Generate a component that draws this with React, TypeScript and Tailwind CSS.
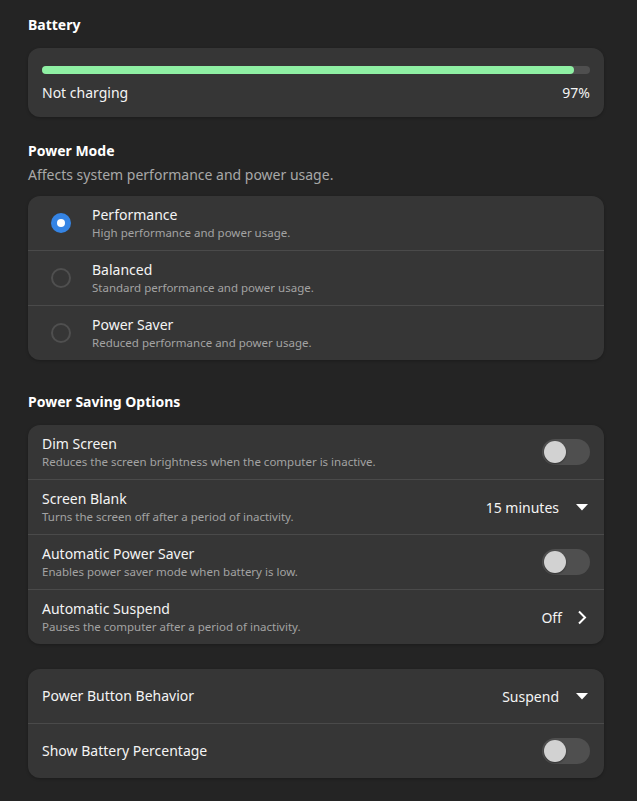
import React from "react";

const font = { fontFamily: '"Noto Sans", "Open Sans", sans-serif' };

function Toggle() {
  return (
    <div className="w-[48px] h-[26px] rounded-full bg-[#4f4f4f] p-[2px] flex items-center shrink-0">
      <div className="w-[22px] h-[22px] rounded-full bg-[#d2d2d2] shadow-[0_1px_2px_rgba(0,0,0,0.4)]" />
    </div>
  );
}

function Caret() {
  return (
    <svg width="12" height="7" viewBox="0 0 12 7" className="shrink-0">
      <path d="M0 0 H12 L6 6.5 Z" fill="#ffffff" />
    </svg>
  );
}

function Chevron() {
  return (
    <svg width="10" height="15" viewBox="0 0 10 15" className="shrink-0">
      <path d="M2 1.5 L8 7.5 L2 13.5" fill="none" stroke="#ffffff" strokeWidth="2" />
    </svg>
  );
}

function Radio({ on }: { on?: boolean }) {
  if (on)
    return (
      <div className="w-[20px] h-[20px] rounded-full bg-[#3584e4] flex items-center justify-center shrink-0">
        <div className="w-[8px] h-[8px] rounded-full bg-white" />
      </div>
    );
  return <div className="w-[20px] h-[20px] rounded-full border-2 border-[#4f4f4f] shrink-0" />;
}

function Row({
  title,
  sub,
  children,
  last,
}: {
  title: string;
  sub?: string;
  children?: React.ReactNode;
  last?: boolean;
}) {
  return (
    <div
      className={
        "h-[54px] flex items-center justify-between pl-[14px] pr-[14px] box-content " +
        (last ? "" : "border-b border-[#4a4a4a]")
      }
    >
      <div className="flex flex-col">
        <div className="text-[14px] leading-[20px] text-[#f4f4f4]">{title}</div>
        {sub && <div className="text-[11.5px] leading-[16px] text-[#a3a3a3]">{sub}</div>}
      </div>
      <div className="flex items-center">{children}</div>
    </div>
  );
}

function ModeRow({ title, sub, on, last }: { title: string; sub: string; on?: boolean; last?: boolean }) {
  return (
    <div
      className={
        "h-[54px] flex items-center pl-[23px] gap-[21px] box-content " +
        (last ? "" : "border-b border-[#4a4a4a]")
      }
    >
      <Radio on={on} />
      <div className="flex flex-col">
        <div className="text-[14px] leading-[20px] text-[#f4f4f4]">{title}</div>
        <div className="text-[11.5px] leading-[16px] text-[#a3a3a3]">{sub}</div>
      </div>
    </div>
  );
}

const card = "bg-[#363636] rounded-[12px] shadow-[0_1px_3px_rgba(0,0,0,0.25)] overflow-hidden";

export default function App() {
  return (
    <div style={font} className="min-h-screen bg-[#242424] text-white pl-[28px] pr-[33px] pt-[15px] pb-[20px]">
      <h2 className="text-[14px] leading-[20px] font-bold">Battery</h2>
      <div className={card + " mt-[13px] px-[14px] pt-[18px] pb-[14px]"}>
        <div className="h-[8px] rounded-full bg-[#4f4f4f]">
          <div className="h-[8px] rounded-full bg-[#8ff0a4] w-[97%]" />
        </div>
        <div className="mt-[9px] flex justify-between text-[14px] leading-[20px] text-[#f4f4f4]">
          <span>Not charging</span>
          <span>97%</span>
        </div>
      </div>

      <h2 className="mt-[24px] text-[14px] leading-[20px] font-bold">Power Mode</h2>
      <p className="mt-[4px] text-[14px] leading-[20px] text-[#a8a8a8]">
        Affects system performance and power usage.
      </p>
      <div className={card + " mt-[11px]"}>
        <ModeRow on title="Performance" sub="High performance and power usage." />
        <ModeRow title="Balanced" sub="Standard performance and power usage." />
        <ModeRow last title="Power Saver" sub="Reduced performance and power usage." />
      </div>

      <h2 className="mt-[32px] text-[14px] leading-[20px] font-bold">Power Saving Options</h2>
      <div className={card + " mt-[13px]"}>
        <Row title="Dim Screen" sub="Reduces the screen brightness when the computer is inactive.">
          <Toggle />
        </Row>
        <Row title="Screen Blank" sub="Turns the screen off after a period of inactivity.">
          <span className="text-[14px] text-[#f4f4f4] mr-[17px]">15 minutes</span>
          <span className="mr-[2px] flex">
            <Caret />
          </span>
        </Row>
        <Row title="Automatic Power Saver" sub="Enables power saver mode when battery is low.">
          <Toggle />
        </Row>
        <Row last title="Automatic Suspend" sub="Pauses the computer after a period of inactivity.">
          <span className="text-[14px] text-[#f4f4f4] mr-[15px]">Off</span>
          <span className="mr-[3px] flex">
            <Chevron />
          </span>
        </Row>
      </div>

      <div className={card + " mt-[25px]"}>
        <Row title="Power Button Behavior">
          <span className="text-[14px] text-[#f4f4f4] mr-[17px]">Suspend</span>
          <span className="mr-[2px] flex">
            <Caret />
          </span>
        </Row>
        <Row last title="Show Battery Percentage">
          <Toggle />
        </Row>
      </div>
    </div>
  );
}
